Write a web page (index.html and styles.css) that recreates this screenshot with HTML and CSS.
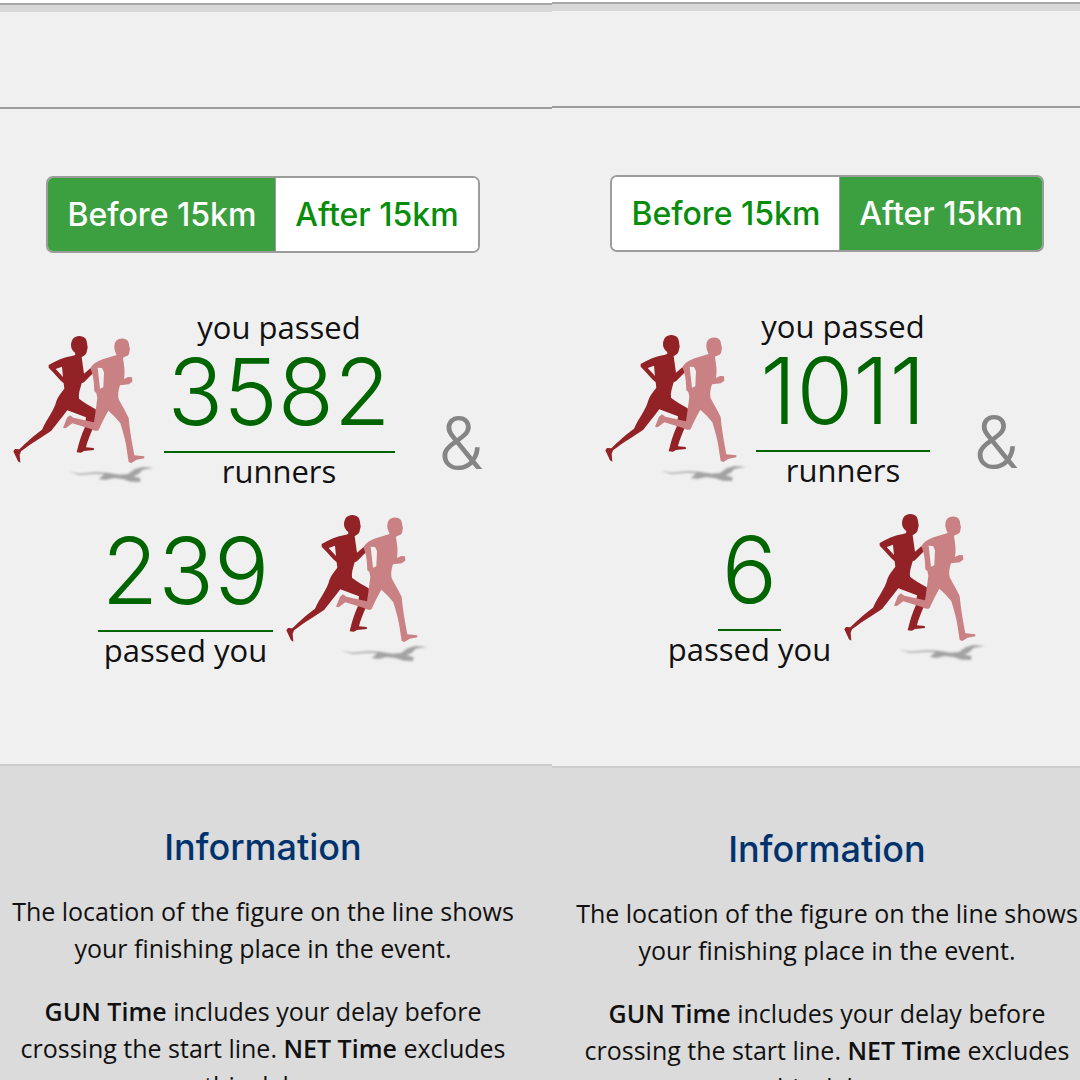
FILE: index.html
```html
<!DOCTYPE html>
<html lang="en">
<head>
  <meta charset="UTF-8">
  <meta name="viewport" content="width=device-width, initial-scale=1.0">
  <title>Race results</title>
  <link rel="stylesheet" href="styles.css">
</head>
<body>
  <!-- Shared runners drawing -->
  <svg class="defs" aria-hidden="true">
    <defs>
      <filter id="soft" x="-10%" y="-50%" width="120%" height="200%">
        <feGaussianBlur stdDeviation="2.5"/>
      </filter>
      <symbol id="runners" viewBox="24 39 429 450">
        <g fill="#a3a3a3" filter="url(#soft)">
          <path d="M192 451 L225 458 L275 454 L310 455 L346 461 L372 459 L392 445 L415 438 L450 441 L416 446 L403 460 L388 466 L410 472 L408 483 L380 482 L355 474 L329 471 L305 477 L284 474 L301 460 L274 458 L225 462 Z"/>
        </g>
        <path fill="#922226" fill-rule="evenodd" d="M204 105 C213 103 216 101 213 95 C200 86 198 69 205 56 C213 42 235 41 245 53 C250 62 249 71 251 79 C251 85 248 88 248 94 C245 104 237 105 233 109 C235 125 238 142 240 158 L259 142 L271 152 L240 184 L233 187 C228 205 223 218 225 233 C239 245 258 254 275 265 C279 281 275 300 267 322 C258 343 250 361 246 379 L269 381 L270 387 L240 390 L231 395 L218 394 L221 382 C226 362 232 341 242 320 L246 289 L190 268 C180 281 160 307 142 329 C117 347 82 366 51 391 L47 402 L49 425 L42 421 L28 391 L33 384 L46 385 C67 364 93 341 114 326 C130 292 151 267 157 241 C162 225 173 214 181 203 L179 187 C166 176 151 157 134 140 L134 132 C156 119 180 109 204 105 Z M174 137 L155 144 L177 168 Z"/>
        <path fill="#ca8184" fill-rule="evenodd" d="M338 102 C333 91 328 79 333 65 C339 51 361 49 371 59 C377 67 374 75 378 83 L375 99 C371 107 363 105 357 111 C360 133 364 150 360 174 L372 168 L384 169 L385 182 L374 190 L348 193 C343 207 341 222 344 235 C354 255 365 271 374 291 C377 323 382 355 387 381 L391 403 L421 406 L421 412 L398 416 L382 426 L374 423 L369 391 C366 361 355 327 349 307 C339 293 324 279 313 269 C303 288 291 309 284 327 C277 333 269 327 259 323 L205 307 L185 322 L177 320 L189 290 L198 283 L208 290 L270 304 C274 280 277 254 280 230 L277 216 L271 211 C270 191 270 167 259 142 C265 130 278 121 296 115 Z M281 140 L288 203 L298 199 L300 154 L294 141 Z"/>
      </symbol>
    </defs>
  </svg>

  <main class="compare">
    <section class="panel">
      <div class="content">
        <header class="bar"></header>
        <div class="stats">
          <div class="toggle">
            <button class="tab active" type="button">Before 15km</button>
            <button class="tab" type="button">After 15km</button>
          </div>
          <div class="row">
            <svg class="runners" role="img" aria-label="Runners"><use href="#runners"/></svg>
            <p class="count">
              <span>you passed</span>
              <span class="number">3582</span>
              <span>runners</span>
            </p>
            <span class="amp">&amp;</span>
          </div>
          <div class="row">
            <p class="count">
              <span class="number">239</span>
              <span>passed you</span>
            </p>
            <svg class="runners" role="img" aria-label="Runners"><use href="#runners"/></svg>
          </div>
        </div>
        <div class="info">
          <h2>Information</h2>
          <p>The location of the figure on the line shows<br>your finishing place in the event.</p>
          <p><strong>GUN Time</strong> includes your delay before<br>crossing the start line. <strong>NET Time</strong> excludes<br>this delay.</p>
        </div>
      </div>
    </section>

    <section class="panel after">
      <div class="content">
        <header class="bar"></header>
        <div class="stats">
          <div class="toggle">
            <button class="tab" type="button">Before 15km</button>
            <button class="tab active" type="button">After 15km</button>
          </div>
          <div class="row">
            <svg class="runners" role="img" aria-label="Runners"><use href="#runners"/></svg>
            <p class="count">
              <span>you passed</span>
              <span class="number">1011</span>
              <span>runners</span>
            </p>
            <span class="amp">&amp;</span>
          </div>
          <div class="row">
            <p class="count">
              <span class="number">6</span>
              <span>passed you</span>
            </p>
            <svg class="runners" role="img" aria-label="Runners"><use href="#runners"/></svg>
          </div>
        </div>
        <div class="info">
          <h2>Information</h2>
          <p>The location of the figure on the line shows<br>your finishing place in the event.</p>
          <p><strong>GUN Time</strong> includes your delay before<br>crossing the start line. <strong>NET Time</strong> excludes<br>this delay.</p>
        </div>
      </div>
    </section>
  </main>
</body>
</html>
```

FILE: styles.css
```css
:root {
  --page: #f0f0f0;
  --info: #dbdbdb;
  --line: #9c9c9c;
  --green: #3c9f40;
  --green-text: #078d0b;
  --green-dark: #006400;
  --navy: #00336e;
  --text: #111;
  --heading-font: Inter, "Open Sans", sans-serif;
}

* {
  box-sizing: border-box;
}

body {
  margin: 0;
  height: 100vh;
  overflow: hidden;
  font-family: "Open Sans", "Noto Sans", sans-serif;
  color: var(--text);
  background: var(--page);
}

h2,
p {
  margin: 0;
}

.defs {
  position: absolute;
  width: 0;
  height: 0;
}

/* Two phone screens side by side, the second one runs off the edge */
.compare {
  display: grid;
  grid-template-columns: 552fr 528fr;
  height: 100%;
}

.panel {
  min-width: 0;
  overflow: hidden;
  background: linear-gradient(var(--page) 70%, var(--info) 70%);
  border-top: 3px solid #fff;
}

.panel.after {
  border-top-width: 2px;
}

.bar {
  height: 106px;
  border-top: 2px solid #a8a8a8;
  border-bottom: 2px solid var(--line);
  box-shadow: inset 0 7px #d8d8d8;
}

.stats {
  display: flex;
  flex-direction: column;
  align-items: center;
  padding: 67px 26px 96px 0;
  background: var(--page);
}

.after .stats {
  margin-right: -22px;
  padding: 67px 0 99px;
}

.toggle {
  display: flex;
  margin-bottom: 56px;
  border: 2px solid var(--line);
  border-radius: 7px;
  background: #fff;
  overflow: hidden;
}

.tab {
  height: 73px;
  padding: 0 19px;
  border: 0;
  font-family: var(--heading-font);
  font-size: 32px;
  font-weight: 500;
  color: var(--green-text);
  background: #fff;
  cursor: pointer;
}

.tab + .tab {
  border-left: 1px solid var(--line);
}

.tab.active {
  color: #fff;
  background: var(--green);
}

.row {
  display: flex;
  align-items: flex-end;
}

.row + .row {
  margin-top: 24px;
}

.runners {
  flex: none;
  width: 143px;
  height: 150px;
  margin-bottom: 5px;
}

.runners + .count {
  margin-left: 9px;
}

.count + .runners {
  margin-left: 12px;
}

.count {
  display: flex;
  flex-direction: column;
  align-items: center;
  font-size: 31px;
  line-height: 36px;
}

.number {
  padding: 0 4px 12px;
  border-bottom: 2px solid var(--green-dark);
  font-family: var(--heading-font);
  font-size: 92px;
  font-weight: 300;
  line-height: 94px;
  color: var(--green-dark);
}

.amp {
  margin: 0 31px 0 44px;
  font-family: var(--heading-font);
  font-size: 72px;
  font-weight: 300;
  line-height: 92px;
  color: #858585;
}

.info {
  padding: 59px 26px 0 0;
  border-top: 2px solid #ccc;
  background: var(--info);
  font-size: 25px;
  line-height: 37px;
  text-align: center;
  white-space: nowrap;
}

.after .info {
  margin-right: -22px;
  padding-right: 0;
}

.info h2 {
  margin-bottom: 24px;
  font-family: var(--heading-font);
  font-size: 36px;
  font-weight: 500;
  line-height: 44px;
  color: var(--navy);
}

.info p + p {
  margin-top: 26px;
}

.info strong {
  font-weight: 600;
}
```
